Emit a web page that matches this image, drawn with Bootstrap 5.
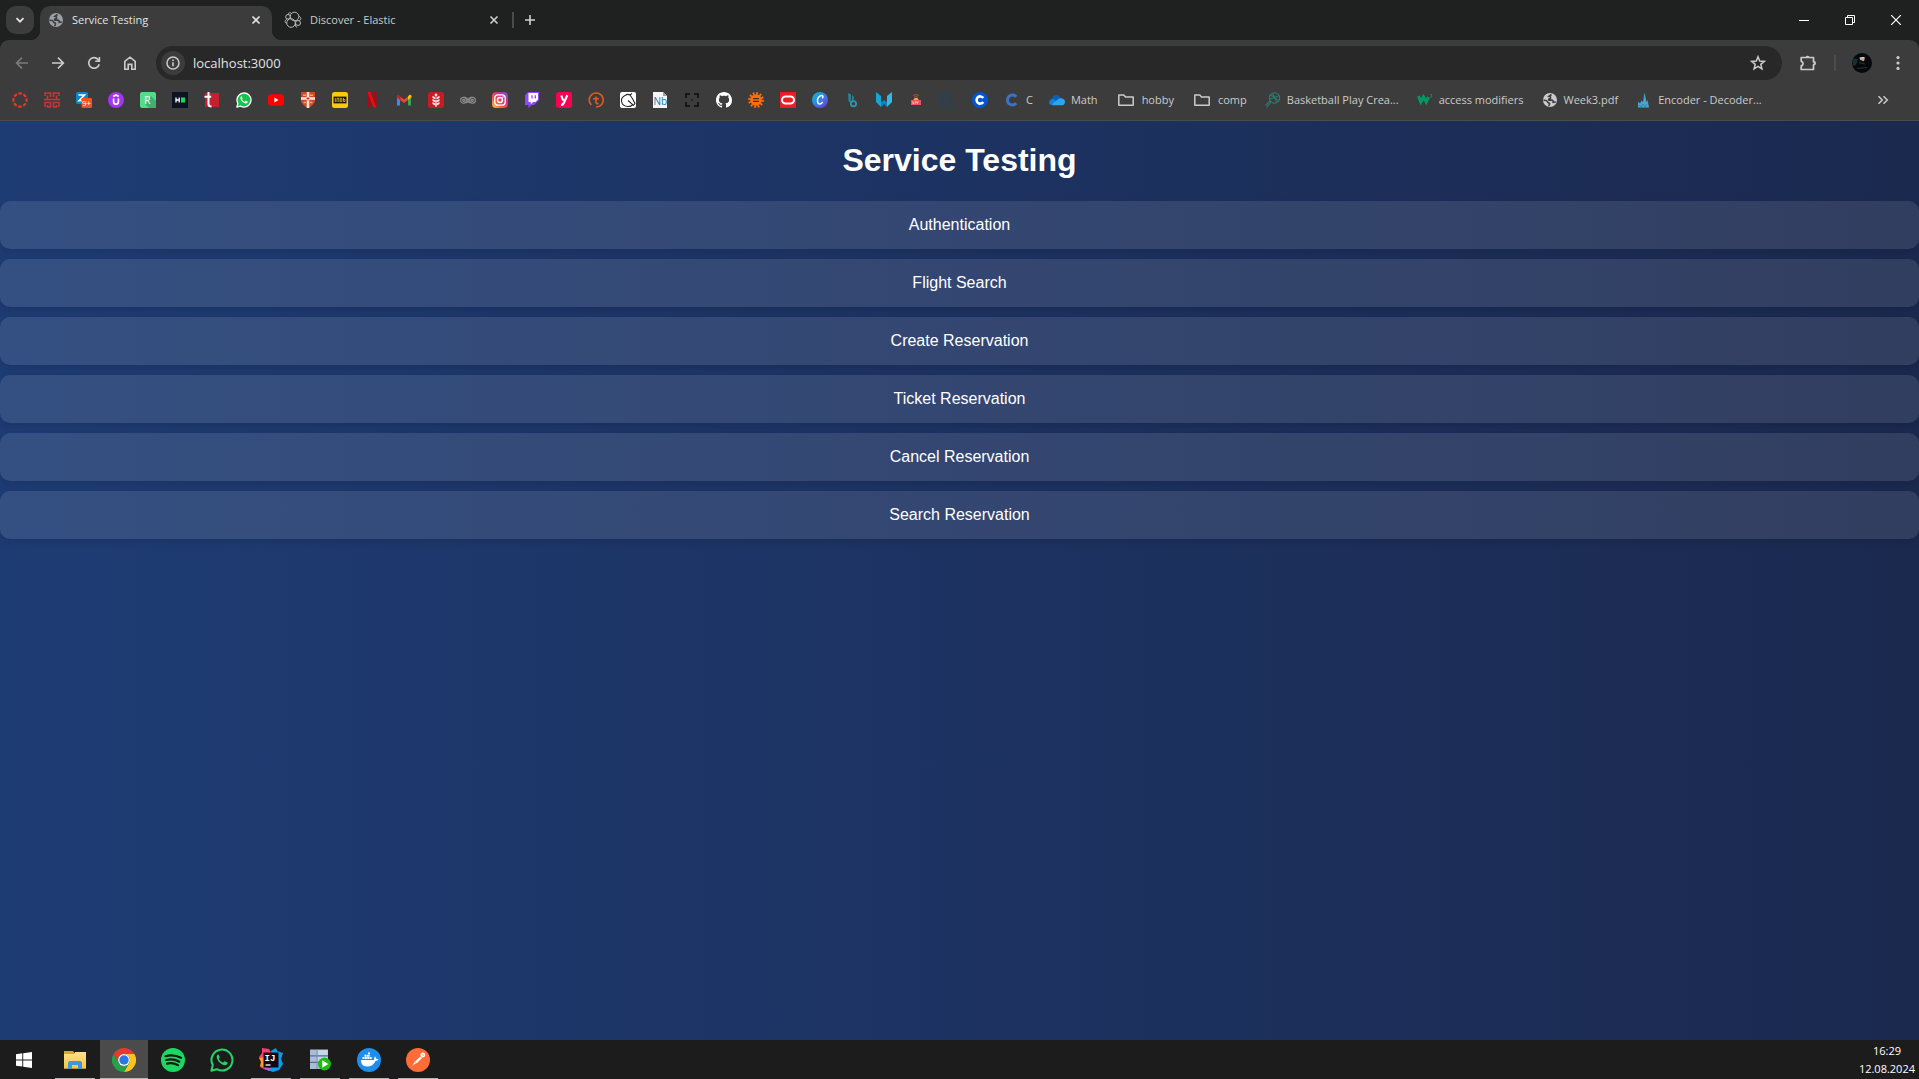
<!DOCTYPE html>
<html lang="en">
<head>
<meta charset="utf-8">
<meta name="viewport" content="width=device-width, initial-scale=1">
<title>Service Testing</title>
<link href="https://cdn.jsdelivr.net/npm/bootstrap@5.3.0/dist/css/bootstrap.min.css" rel="stylesheet">
<style>
  :root { --frame: #1f2120; --chrome: #3c3c3c; --field: #282828; --ink: #cbcbcb; }
  body { font-family: "Open Sans", "Noto Sans", sans-serif; font-size: 11px; line-height: 16px; background: var(--frame); color: var(--ink); }
  svg { display: block; flex: none; }
  a { color: inherit; text-decoration: none; }
  button { background: none; border: 0; padding: 0; color: inherit; }

  /* tab strip */
  .tabstrip { height: 40px; padding: 6px 0 0 6px; }
  .tab-search { width: 28px; height: 28px; border-radius: 10px; background: var(--chrome); margin-right: 6px; }
  .page-tab { width: 232px; height: 34px; padding: 0 9px 6px 8px; }
  .page-tab.second { width: 234px; margin: 0 2px 0 4px; }
  .page-tab.current { background: var(--chrome); border-radius: 10px 10px 0 0; color: #e3e3e3; }
  .page-tab.current::before, .page-tab.current::after { content: ""; position: absolute; bottom: 0; width: 9px; height: 9px; }
  .page-tab.current::before { left: -9px; background: radial-gradient(circle at 0 0, transparent 9px, var(--chrome) 9px); }
  .page-tab.current::after { right: -9px; background: radial-gradient(circle at 100% 0, transparent 9px, var(--chrome) 9px); }
  .tab-close { width: 14px; height: 14px; }
  .rule { width: 2px; height: 16px; background: #4a4b4b; }
  .new-tab { width: 32px; height: 28px; }
  .win-btn { width: 46px; height: 28px; color: #fff; }

  /* toolbar */
  .toolbar-area { background: var(--chrome); border-radius: 9px 9px 0 0; border-bottom: 1px solid #4b4b4b; padding-bottom: 6px; }
  .toolbar-row { height: 46px; padding: 0 3px 0 4px; }
  .tool { width: 36px; height: 34px; }
  .address { height: 34px; border-radius: 17px; background: var(--field); padding: 0 11px 0 5px; margin: 0 8px; }
  .info-btn { width: 24px; height: 24px; border-radius: 12px; background: var(--chrome); }
  .address input { background: none; border: 0; outline: 0; padding: 0; font-size: 13px; color: #e3e3e3; min-width: 0; }
  .bookmarks { height: 28px; padding: 0 22px 0 4px; }
  .bm { padding: 0 8px; gap: 6px; white-space: nowrap; }
  .bm.labelled { padding-right: 10px; }

  /* page */
  .service-page { font-family: "Liberation Sans", Arial, sans-serif; background: linear-gradient(to right, #1e3c74, #1b294f); color: #fff; }
  .service-page h1 { font-size: 32px; line-height: 37px; font-weight: 700; margin: 21px 0 22px; }
  .service-list { gap: 10px; }
  .service-btn { height: 48px; font-size: 16px; border-radius: 10px; background: rgba(255,255,255,.1); box-shadow: 0 4px 6px rgba(0,0,0,.1); }

  /* taskbar */
  .taskbar { height: 39px; background: #1c1c1c; color: #fff; }
  .task { width: 48px; height: 39px; margin-right: 1px; }
  .task.start { width: 50px; padding-right: 2px; }
  .task.open::after { content: ""; position: absolute; left: 4px; right: 4px; bottom: 0; height: 1px; background: #b9b2b0; }
  .task.active { background: #4b4b4b; }
  .task.active::after { left: 0; right: 0; }
  .clock { line-height: 18px; padding-right: 4px; }
</style>
<script src="https://cdn.jsdelivr.net/npm/bootstrap@5.3.0/dist/js/bootstrap.bundle.min.js" defer></script>
</head>
<body class="d-flex flex-column min-vh-100">

<svg width="0" height="0" class="position-absolute" aria-hidden="true">
  <defs>
    <symbol id="globe" viewBox="0 0 16 16">
      <circle cx="8" cy="8" r="7" fill="currentColor"/>
      <path d="M9.500 2.500L7 4.300q2.500.4 1.200 2.200-2 .4-1.400 1.600h2.700q2 .3 1.700 2.200l2.600-.3M1.500 8.300q3.200-.3 4 1.500.3 1 1.800 1.300.8.800-.8 3" fill="none" stroke="#3a3c3e" stroke-width="1.600"/>
    </symbol>
    <symbol id="cross" viewBox="0 0 14 14"><path d="M3.500 3.500l7 7m0-7l-7 7" stroke="currentColor" stroke-width="1.700"/></symbol>
    <symbol id="folder" viewBox="0 0 20 16"><path d="M2.800 13.200V3h5l1.700 2h7.700v8.200z" fill="none" stroke="currentColor" stroke-width="1.500" stroke-linejoin="round"/></symbol>
    <symbol id="phone" viewBox="0 0 24 24">
      <path d="M1.300 22.700l1.500-5.600a10.500 10.500 0 1 1 4.100 4.100z" fill="var(--fillbg)" stroke="var(--line)" stroke-width="2" stroke-linejoin="round"/>
      <path d="M8.300 6.500c-.5 0-1.600.8-1.600 2.500 0 3.600 5 8.200 8.200 8.200 1.500 0 2.700-1 2.700-2.200 0-.5-.2-.7-2.700-1.800-.5-.2-.8.200-1.500 1.100-.3.300-.6.200-1.300-.1-1.300-.7-2.500-1.700-3.300-3.200-.2-.4.900-1.100.9-1.700-.8-2-.8-2.800-1.400-2.800z" fill="var(--line)"/>
    </symbol>
    <linearGradient id="insta" x1="0" y1="1" x2="1" y2="0"><stop offset="0" stop-color="#fdc84b"/><stop offset=".35" stop-color="#f4573c"/><stop offset=".65" stop-color="#d32e90"/><stop offset="1" stop-color="#6b4fd8"/></linearGradient>
    <linearGradient id="canva" x1="0" y1="0" x2="1" y2="1"><stop offset="0" stop-color="#05c3cc"/><stop offset=".55" stop-color="#3a7be0"/><stop offset="1" stop-color="#7d2ae8"/></linearGradient>
    <linearGradient id="explorer" x1="0" y1="0" x2="0" y2="1"><stop offset="0" stop-color="#ffe08a"/><stop offset="1" stop-color="#f7c443"/></linearGradient>
  </defs>
</svg>

<header>
  <div class="tabstrip d-flex align-items-start">
    <button class="tab-search d-flex align-items-center justify-content-center" aria-label="Search tabs"><svg width="12" height="12" viewBox="0 0 12 12"><path d="M2.500 4.200L6 7.700l3.500-3.500" fill="none" stroke="#e3e3e3" stroke-width="1.800"/></svg></button>
    <div class="page-tab current position-relative d-flex align-items-center gap-2">
      <svg width="16" height="16" color="#9aa0a6"><use href="#globe"/></svg>
      <span class="flex-grow-1">Service Testing</span>
      <button class="tab-close" aria-label="Close Service Testing"><svg width="14" height="14"><use href="#cross"/></svg></button>
    </div>
    <div class="page-tab second d-flex align-items-center gap-2">
      <svg width="18" height="18" viewBox="0 0 18 18" fill="none" stroke="#b8b8b8" stroke-width="1"><circle cx="10.500" cy="5.500" r="4.300"/><circle cx="7" cy="12" r="4.300"/><circle cx="4" cy="5.800" r="2.300"/><circle cx="14" cy="12" r="2.500"/><path d="M3 8.200c-2.300.6-2.500 3.500-.5 4.300M15 9.600c2.500-.7 2.600-3.400-.2-4.400M4 3.500c.4-1.800 2-2.500 3.300-1M11.500 12.500c-.3 2.500 0 3 1.600 4"/></svg>
      <span class="flex-grow-1">Discover - Elastic</span>
      <button class="tab-close" aria-label="Close Discover"><svg width="14" height="14"><use href="#cross"/></svg></button>
    </div>
    <div class="d-flex align-items-center">
      <span class="rule"></span>
      <button class="new-tab d-flex align-items-center justify-content-center" aria-label="New tab"><svg width="12" height="12" viewBox="0 0 12 12"><path d="M6 1v10M1 6h10" stroke="#d0d0d0" stroke-width="1.600"/></svg></button>
    </div>
    <div class="d-flex ms-auto">
      <button class="win-btn d-flex align-items-center justify-content-center" aria-label="Minimize"><svg width="10" height="10" viewBox="0 0 10 10"><path d="M0 5.500h10" stroke="currentColor"/></svg></button>
      <button class="win-btn d-flex align-items-center justify-content-center" aria-label="Restore"><svg width="10" height="10" viewBox="0 0 10 10"><path d="M.5 2.500h7v7h-7zM2.500 2V.5h7v7H8" fill="none" stroke="currentColor"/></svg></button>
      <button class="win-btn d-flex align-items-center justify-content-center" aria-label="Close"><svg width="10" height="10" viewBox="0 0 10 10"><path d="M0 0l10 10M10 0L0 10" stroke="currentColor" stroke-width="1.200"/></svg></button>
    </div>
  </div>

  <div class="toolbar-area">
    <div class="toolbar-row d-flex align-items-center">
      <button class="tool d-flex align-items-center justify-content-center" aria-label="Back"><svg width="16" height="16" viewBox="0 0 16 16" fill="none" stroke="#7b7b7b" stroke-width="1.600"><path d="M14 8H3M8 2.600L2.600 8 8 13.400"/></svg></button>
      <button class="tool d-flex align-items-center justify-content-center" aria-label="Forward"><svg width="16" height="16" viewBox="0 0 16 16" fill="none" stroke="currentColor" stroke-width="1.600"><path d="M2 8h11M8 2.600L13.400 8 8 13.400"/></svg></button>
      <button class="tool d-flex align-items-center justify-content-center" aria-label="Reload"><svg width="16" height="16" viewBox="0 0 16 16" fill="none" stroke="currentColor" stroke-width="1.600"><path d="M13.200 9.200A5.300 5.300 0 1 1 12 4.400l1.200 1.500M13.400 2v4.200H9.200"/></svg></button>
      <button class="tool d-flex align-items-center justify-content-center" aria-label="Home"><svg width="16" height="16" viewBox="0 0 16 16" fill="none" stroke="currentColor" stroke-width="1.600"><path d="M2.800 14.200V6.400L8 2.200l5.200 4.200v7.800h-3.400V9.400H6.200v4.800z"/></svg></button>
      <form class="address d-flex align-items-center flex-grow-1">
        <button type="button" class="info-btn d-flex align-items-center justify-content-center" aria-label="Site information"><svg width="14" height="14" viewBox="0 0 14 14"><circle cx="7" cy="7" r="6" fill="none" stroke="currentColor" stroke-width="1.500"/><path d="M7 6.200v4M7 3.400v1.600" stroke="currentColor" stroke-width="1.600"/></svg></button>
        <input class="flex-grow-1 ms-2" type="text" value="localhost:3000" aria-label="Address">
        <button type="button" class="px-1" aria-label="Bookmark this page"><svg width="18" height="18" viewBox="0 0 18 18"><path d="M9 2.800l1.700 4.300 4.600.3-3.500 2.900 1.100 4.500L9 12.300l-3.900 2.500 1.100-4.500-3.500-2.900 4.600-.3z" fill="none" stroke="currentColor" stroke-width="1.500"/></svg></button>
      </form>
      <button class="tool d-flex align-items-center justify-content-center" aria-label="Extensions"><svg width="18" height="18" viewBox="0 0 18 18"><path d="M2.200 3.500h12.300v4.200a1.600 1.600 0 0 1 0 3.200v4.600H2.200v-3.700a2.300 2.300 0 0 0 0-4.500z" fill="none" stroke="currentColor" stroke-width="1.700" stroke-linejoin="round"/><path d="M6.700 3.300a1.900 1.900 0 0 1 3.700 0zM14.700 7.400a1.900 1.900 0 0 1 0 3.700z" fill="currentColor"/></svg></button>
      <span class="rule ms-2 me-2"></span>
      <button class="tool d-flex align-items-center justify-content-center" aria-label="Profile"><svg width="20" height="20" viewBox="0 0 20 20"><circle cx="10" cy="10" r="10" fill="#06090c"/><path d="M1.500 5.500Q0 10 1 13l3-1 2-6z" fill="#123038"/><path d="M8 5.200l2.500-1 2.200.8-.2 2-1.300 1.500-1.200-1-2-.5z" fill="#c9a18e"/><path d="M7.500 4.500l5-.5v1l-5 .5z" fill="#e9e4e0"/><path d="M7 9.500l6 1.500M5 15.500l10-1" stroke="#26343b" stroke-width="1.200"/></svg></button>
      <button class="tool d-flex align-items-center justify-content-center" aria-label="Menu"><svg width="16" height="16" viewBox="0 0 16 16" fill="currentColor"><circle cx="8" cy="2.600" r="1.600"/><circle cx="8" cy="8" r="1.600"/><circle cx="8" cy="13.400" r="1.600"/></svg></button>
    </div>

    <nav class="bookmarks d-flex align-items-center" aria-label="Bookmarks">
      <a class="bm" href="#" aria-label="Canvas"><svg width="16" height="16" viewBox="0 0 16 16"><circle cx="8" cy="8" r="6.600" fill="none" stroke="#e03a2d" stroke-width="2.200" stroke-dasharray="3.600 1.580" stroke-dashoffset="1.800"/></svg></a>
      <a class="bm" href="#" aria-label="University"><svg width="16" height="16" viewBox="0 0 16 16" fill="none" stroke="#c8343b" stroke-width="1.600"><path d="M1 4V1h5.500v4M15 4V1H9.500v4M3.500 3.500V7M12.500 3.500V7M0 7.500h16M1 15V10.500h5.500V15H3.500v-2M15 15v-4.500H9.500V15h3v-2"/></svg></a>
      <a class="bm" href="#" aria-label="Zimbra"><svg width="16" height="16" viewBox="0 0 16 16"><rect width="12" height="12" rx="1.500" fill="#0a86cc"/><path d="M2.500 3h6l-5.500 5.800H6" fill="none" stroke="#fff" stroke-width="1.600"/><rect x="5.500" y="6" width="10.500" height="10" rx="1" fill="#e95420"/><text x="6" y="14" font-family="Open Sans" font-size="8" fill="#fff">9+</text></svg></a>
      <a class="bm" href="#" aria-label="Udemy"><svg width="16" height="16" viewBox="0 0 16 16"><circle cx="8" cy="8" r="8" fill="#a435f0"/><path d="M5.600 6.500v3.300a2.400 2.400 0 0 0 4.800 0V6.500M5.300 4.600L8 3l2.700 1.600" fill="none" stroke="#fff" stroke-width="1.700"/></svg></a>
      <a class="bm" href="#" aria-label="Replit"><svg width="16" height="16" viewBox="0 0 16 16"><rect width="16" height="16" rx="2" fill="#55dc8b"/><path d="M11 4l5 5v7H9l-4-4z" fill="#3fb070"/><text x="4.300" y="11.500" font-family="Open Sans" font-size="10" fill="#fff">R</text></svg></a>
      <a class="bm" href="#" aria-label="HackerRank"><svg width="16" height="16" viewBox="0 0 16 16"><rect width="16" height="16" fill="#0b1420"/><path d="M4 5.500v5M7.200 5.500v5M4 8h3" stroke="#fff" stroke-width="1.300"/><rect x="9" y="5.500" width="4" height="5" fill="#1ed760"/></svg></a>
      <a class="bm" href="#" aria-label="Tureng"><svg width="16" height="16" viewBox="0 0 16 16"><rect x="1" y="1" width="14" height="14" rx="1" fill="#c4202f"/><path d="M4.500 0v12q0 2.500 3 2.500M.5 4.700h6.700" fill="none" stroke="#fff" stroke-width="2"/></svg></a>
      <a class="bm" href="#" aria-label="WhatsApp"><svg width="16" height="16" style="--fillbg:#17c34b;--line:#fff"><use href="#phone"/></svg></a>
      <a class="bm" href="#" aria-label="YouTube"><svg width="16" height="16" viewBox="0 0 16 16"><rect y="2.300" width="16" height="11.400" rx="3" fill="#f00"/><path d="M6.400 5.600v4.800L10.500 8z" fill="#fff"/></svg></a>
      <a class="bm" href="#" aria-label="Cambridge Dictionary"><svg width="16" height="16" viewBox="0 0 16 16"><path d="M1 0h14v9q-1 4.500-7 7-6-2.500-7-7z" fill="#d6452c"/><path d="M8 0v16M1 6.500h14" stroke="#f5e9d8" stroke-width="2.600"/><path d="M3 3.300h3M10 3.300h3M3.500 10.500H6M10 10.500h2.500" stroke="#f0b240" stroke-width="1.600"/><path d="M8 5v3.500M6.500 6.500h3" stroke="#c73a2a"/></svg></a>
      <a class="bm" href="#" aria-label="IMDb"><svg width="16" height="16" viewBox="0 0 16 16"><rect width="16" height="16" rx="2.500" fill="#f9cb0c"/><rect x="1.500" y="4.600" width="13" height="6.800" fill="#1b1a10"/><path d="M3.300 6v4M5 10V6.300h1.800V10M8.300 6.400v3.200h1.500V6.400zM11.500 6v3.500H13V7.500h-1.500" fill="none" stroke="#d9b10d" stroke-width=".9"/></svg></a>
      <a class="bm" href="#" aria-label="Netflix"><svg width="16" height="16" viewBox="0 0 16 16"><path d="M3.500 0v16l3-.4V0zM9.500 0v15.600l3 .4V0z" fill="#b1060f"/><path d="M3.500 0h3l6 16-3-.4z" fill="#ee0914"/></svg></a>
      <a class="bm" href="#" aria-label="Gmail"><svg width="16" height="16" viewBox="0 0 16 16"><path d="M1 4v9.500h3V7" fill="#4285f4"/><path d="M12 7v6.500h3V4" fill="#34a853"/><path d="M12 4.200V8l3.500-2.700V4q-.8-2-2.500-.8z" fill="#fbbc04"/><path d="M4 4.500l4 3 4-3V8l-4 3-4-3z" fill="#ea4335"/><path d="M.8 5.300V4Q1.500 2 3.500 3.500L4.500 5v3.400z" fill="#c5221f"/></svg></a>
      <a class="bm" href="#" aria-label="Wheat"><svg width="16" height="16" viewBox="0 0 16 16"><rect width="16" height="16" rx="2.500" fill="#c61b22"/><path d="M8 15V8" stroke="#f6dada" stroke-width="1.200"/><path d="M8 1l1.600 2L8 5 6.400 3zM7.600 7.500L4.500 6V3.800l3.100 1.700zM8.400 7.500L11.500 6V3.800L8.400 5.500zM7.600 10.600L4.500 9V6.900l3.100 1.600zM8.400 10.600L11.500 9V6.900L8.400 8.500zM7.600 13.700l-3.100-1.600V10l3.100 1.600zM8.400 13.700l3.100-1.600V10l-3.100 1.600z" fill="#fbeaea"/></svg></a>
      <a class="bm" href="#" aria-label="Owl"><svg width="16" height="16" viewBox="0 0 16 16" fill="none" stroke="#8d8d8d" stroke-width="1.200"><circle cx="3.500" cy="8.300" r="2.900"/><circle cx="12.500" cy="8.300" r="2.900"/><circle cx="3.700" cy="8.300" r="1"/><circle cx="12.300" cy="8.300" r="1"/><path d="M4 5.400Q7 5 8 8.500 9 5 12 5.400M6 11l2-2 2 2"/></svg></a>
      <a class="bm" href="#" aria-label="Instagram"><svg width="16" height="16" viewBox="0 0 16 16"><rect width="16" height="16" rx="4" fill="url(#insta)"/><rect x="2.800" y="2.800" width="10.400" height="10.400" rx="3" fill="none" stroke="#fff" stroke-width="1.300"/><circle cx="8" cy="8" r="2.500" fill="none" stroke="#fff" stroke-width="1.400"/><circle cx="11" cy="5" r=".8" fill="#fff"/></svg></a>
      <a class="bm" href="#" aria-label="Twitch"><svg width="16" height="16" viewBox="0 0 16 16"><path d="M4 0L1 3v10h3.500v3l3-3H10l5-5V0z" fill="#9146ff"/><path d="M4.500 1H14v6.500L11.500 10H9l-2.200 2.200V10H4.500z" fill="#fff"/><path d="M8 3.200v3.400M11.300 3.200v3.400" stroke="#9146ff" stroke-width="1.300"/></svg></a>
      <a class="bm" href="#" aria-label="Yemeksepeti"><svg width="16" height="16" viewBox="0 0 16 16"><rect width="16" height="16" rx="2.500" fill="#fa0050"/><path d="M5.300 3.500l1.800 5M11.300 3.300L7.800 11q-.8 2-2.800 1.800" fill="none" stroke="#fff" stroke-width="2.200"/></svg></a>
      <a class="bm" href="#" aria-label="Tutorial"><svg width="16" height="16" viewBox="0 0 16 16" fill="none" stroke="#e05a20" stroke-width="1.600"><path d="M3.300 13A7 7 0 1 1 8 15M8 4.500v5.700q0 1.800 2.600 1.300M5 6.700h6"/></svg></a>
      <a class="bm" href="#" aria-label="Lichess"><svg width="16" height="16" viewBox="0 0 16 16"><rect width="16" height="16" rx="2" fill="#fff"/><path d="M5.500 3.200q2-1.500 4.500-.2Q13 7 15 11.500l-1.500 1.800L8 8.500M5.500 3.200Q1 5 1.500 9.500q1 4.800 6.500 5 3 0 4.500-1.500M10 3l2-1.700" fill="none" stroke="#222" stroke-width="1.100"/></svg></a>
      <a class="bm" href="#" aria-label="Notebook"><svg width="16" height="16" viewBox="0 0 16 16"><path d="M1 0h10l4 4v12H1z" fill="#f4f6f7"/><path d="M11 0v4h4z" fill="#8fa4b3"/><text x="1.400" y="12.800" font-family="Open Sans" font-size="10" fill="#2476b5">Nb</text></svg></a>
      <a class="bm" href="#" aria-label="Frames"><svg width="16" height="16" viewBox="0 0 16 16" fill="none" stroke="#161616" stroke-width="2"><path d="M2 6V2h4M10 2h4v4M14 10v4h-4M6 14H2v-4"/><path d="M7.200 8h1.600" stroke-width="1.600"/></svg></a>
      <a class="bm" href="#" aria-label="GitHub"><svg width="16" height="16" viewBox="0 0 16 16"><path fill="#fff" d="M8 0C3.580 0 0 3.580 0 8c0 3.540 2.290 6.530 5.470 7.590.4.070.55-.17.55-.38 0-.19-.01-.82-.01-1.490-2.010.37-2.530-.49-2.690-.94-.09-.23-.48-.94-.82-1.130-.28-.15-.68-.52-.01-.53.63-.01 1.080.58 1.230.82.72 1.210 1.870.87 2.330.66.070-.52.28-.87.51-1.070-1.780-.2-3.640-.89-3.640-3.950 0-.87.31-1.590.82-2.150-.08-.2-.36-1.020.08-2.120 0 0 .67-.21 2.200.82.640-.18 1.320-.27 2-.27s1.360.09 2 .27c1.530-1.040 2.200-.82 2.200-.82.44 1.100.16 1.920.08 2.120.51.56.82 1.270.82 2.150 0 3.070-1.870 3.750-3.650 3.950.29.25.54.73.54 1.480 0 1.070-.01 1.930-.01 2.200 0 .21.15.46.55.38A8.010 8.010 0 0 0 16 8c0-4.420-3.580-8-8-8"/></svg></a>
      <a class="bm" href="#" aria-label="Gear"><svg width="16" height="16" viewBox="0 0 16 16"><circle cx="8" cy="8" r="5.800" fill="#ff6c0a"/><circle cx="8" cy="8" r="6.600" fill="none" stroke="#ff6c0a" stroke-width="2.600" stroke-dasharray="1.800 1.656"/><path d="M5 6.600h6M5 9.400h6" stroke="#42301f" stroke-width="1.300"/></svg></a>
      <a class="bm" href="#" aria-label="Oracle"><svg width="16" height="16" viewBox="0 0 16 16"><rect width="16" height="16" fill="#ee1c25"/><rect x="2" y="4.500" width="12" height="7" rx="3.500" fill="none" stroke="#fff" stroke-width="2"/></svg></a>
      <a class="bm" href="#" aria-label="Canva"><svg width="16" height="16" viewBox="0 0 16 16"><circle cx="8" cy="8" r="8" fill="url(#canva)"/><path d="M10.300 6.400c1.300-1.600.6-3-.9-2.900-2.400.2-4.200 3-3.900 5.800.3 3.200 3.300 3.500 5.200.7" fill="none" stroke="#fff" stroke-width="1.500"/></svg></a>
      <a class="bm" href="#" aria-label="Feather"><svg width="16" height="16" viewBox="0 0 16 16"><path d="M4 1l3 1.500V11L4.500 9.500zM8 3l1.800 1.500V9L8 11z" fill="#2a7f92"/><circle cx="9.500" cy="11.700" r="2.600" fill="none" stroke="#3192a6" stroke-width="1.900"/></svg></a>
      <a class="bm" href="#" aria-label="W"><svg width="16" height="16" viewBox="0 0 16 16"><path d="M0 0l5 4v11L0 10z" fill="#19a4d8"/><path d="M16 0l-5 4v11l5-5z" fill="#35b9e6"/><path d="M5 15V10L8 8l3 2v5l-3-3z" fill="#0b83bd"/></svg></a>
      <a class="bm" href="#" aria-label="Live"><svg width="16" height="16" viewBox="0 0 16 16"><path d="M5 3.500q3-1.800 6 0M6 5.300q2-1.300 4 0" fill="none" stroke="#a5492f" stroke-width="1.200"/><path d="M6.500 6h3L11 8.500H5z" fill="#d9b24a"/><rect x="3" y="8" width="10" height="5" fill="#f0505a"/><path d="M5 9.300v2.400h1M7.300 9.300v2.400M8.700 9.300l.7 2.200.7-2.200" fill="none" stroke="#fff" stroke-width=".7"/></svg></a>
      <a class="bm" href="#" aria-label="Codecademy"><svg width="16" height="16" viewBox="0 0 16 16" fill="none" stroke="#214458" stroke-width="1.300"><rect x=".8" y="1.500" width="10" height="13"/><path d="M8 6H4.200v4.500H8M12 14h4"/></svg></a>
      <a class="bm" href="#" aria-label="Coursera"><svg width="16" height="16" viewBox="0 0 16 16"><circle cx="8" cy="8" r="8" fill="#0056d2"/><path d="M11.200 6A3.600 3.600 0 1 0 11.200 10" fill="none" stroke="#fff" stroke-width="2.600"/></svg></a>
      <a class="bm d-flex align-items-center" href="#"><svg width="16" height="16" viewBox="0 0 16 16"><path d="M12.200 4.700A5 5 0 1 0 12.200 11.300" fill="none" stroke="#3d72c2" stroke-width="3"/></svg>C</a>
      <a class="bm labelled d-flex align-items-center" href="#"><svg width="16" height="16" viewBox="0 0 16 16"><path d="M3 9Q2.500 3.800 7 3q3.300 0 5 3.500L8 10z" fill="#0a5fb8"/><path d="M0 10.500Q.5 6.500 4.500 7L12 13H3Q.3 13 0 10.500z" fill="#1180d8"/><path d="M4 11l6.500-4.700Q16 6 16 10q0 3-3 3.200H3.500z" fill="#2aa5ee"/></svg>Math</a>
      <a class="bm labelled d-flex align-items-center" href="#"><svg width="20" height="16"><use href="#folder"/></svg>hobby</a>
      <a class="bm labelled d-flex align-items-center" href="#"><svg width="20" height="16"><use href="#folder"/></svg>comp</a>
      <a class="bm labelled d-flex align-items-center" href="#"><svg width="16" height="16" viewBox="0 0 16 16" fill="none" stroke="#2f7a74" stroke-width="1.100"><circle cx="9.500" cy="6" r="5.200"/><path d="M5 3.500q5 0 6.500 7M4.500 7q5-1 9.500-3.500M8 1q0 5 5.800 7.500M6 10l-4.500 5.500M5 9l-4.500 4.500"/></svg>Basketball Play Crea...</a>
      <a class="bm labelled d-flex align-items-center" href="#"><svg width="16" height="16" viewBox="0 0 16 16"><path d="M1.500 4l2.300 6 2.700-5 2.700 5 2.300-5" fill="none" stroke="#059862" stroke-width="3"/><path d="M13.300 2.500h1.700l-1 1.300q1.300.2.700 1.400l-1.300.3" fill="none" stroke="#059862" stroke-width=".8"/></svg>access modifiers</a>
      <a class="bm labelled d-flex align-items-center" href="#"><svg width="16" height="16" color="#c9cbcf"><use href="#globe"/></svg>Week3.pdf</a>
      <a class="bm labelled d-flex align-items-center" href="#"><svg width="16" height="16" viewBox="0 0 16 16"><path d="M2 15.500V9.500l2 2 1.500-3L7 10l1.500-9.500L10.500 10l1-2 1.500 7.500z" fill="#43a7cf"/><path d="M3 13l2 2 2-3 2 3 2-3" fill="none" stroke="#2b82aa" stroke-width=".9"/></svg>Encoder - Decoder...</a>
      <button class="ms-auto px-2" aria-label="More bookmarks"><svg width="12" height="12" viewBox="0 0 12 12" fill="none" stroke="currentColor" stroke-width="1.500"><path d="M1.500 2.200L5.300 6 1.500 9.800M6.500 2.200L10.300 6 6.500 9.800"/></svg></button>
    </nav>
  </div>
</header>

<main class="service-page flex-grow-1">
  <h1 class="text-center">Service Testing</h1>
  <div class="service-list d-grid">
    <button class="service-btn w-100 text-center">Authentication</button>
    <button class="service-btn w-100 text-center">Flight Search</button>
    <button class="service-btn w-100 text-center">Create Reservation</button>
    <button class="service-btn w-100 text-center">Ticket Reservation</button>
    <button class="service-btn w-100 text-center">Cancel Reservation</button>
    <button class="service-btn w-100 text-center">Search Reservation</button>
  </div>
</main>

<footer class="taskbar d-flex align-items-center">
  <button class="task start d-flex align-items-center justify-content-center" aria-label="Start"><svg width="16" height="16" viewBox="0 0 16 16" fill="#fff"><path d="M0 2.200L6.300 1.300V7.500H0zM7.200 1.200L16 0v7.500H7.200zM0 8.400h6.300v6.200L0 13.700zM7.200 8.400H16V16l-8.800-1.200z"/></svg></button>
  <button class="task open position-relative d-flex align-items-center justify-content-center" aria-label="File Explorer"><svg width="22" height="20" viewBox="0 0 22 20"><path d="M0 1h9l1.500 2H22v15.500H0z" fill="#e3a31c"/><path d="M0 4h10l1.200-2H22v16.500H0z" fill="url(#explorer)"/><path d="M4 19v-6.500L5.500 11h11l1.500 1.500V19h-4v-4H8v4z" fill="#3c98d8"/></svg></button>
  <button class="task open active position-relative d-flex align-items-center justify-content-center" aria-label="Google Chrome"><svg width="24" height="24" viewBox="0 0 24 24"><path d="M1.600 6A12 12 0 0 1 22.400 6H12a6 6 0 0 0-5.200 9z" fill="#e33b2e"/><path d="M22.400 6A12 12 0 0 1 12 24l5.200-9A6 6 0 0 0 12 6z" fill="#fcc31e"/><path d="M1.600 6A12 12 0 0 0 12 24l5.200-9a6 6 0 0 1-10.400 0z" fill="#26a148"/><circle cx="12" cy="12" r="5.900" fill="#fff"/><circle cx="12" cy="12" r="4.700" fill="#2a78e4"/></svg></button>
  <button class="task d-flex align-items-center justify-content-center" aria-label="Spotify"><svg width="24" height="24" viewBox="0 0 24 24"><circle cx="12" cy="12" r="12" fill="#1ed760"/><path d="M4.500 8.200Q12.500 6 20 9.800M5.300 12q7-1.800 13 1.700M6 15.600q6-1.300 11 1.500" fill="none" stroke="#101a13" stroke-width="2.200" stroke-linecap="round"/></svg></button>
  <button class="task d-flex align-items-center justify-content-center" aria-label="WhatsApp"><svg width="24" height="24" style="--fillbg:none;--line:#25d366"><use href="#phone"/></svg></button>
  <button class="task open position-relative d-flex align-items-center justify-content-center" aria-label="IntelliJ IDEA"><svg width="24" height="24" viewBox="0 0 24 24"><path d="M3 0l7 1 3 5-6 16-6-3 2-5-3-5 3-4z" fill="#fc3d6f"/><path d="M0 10l6-1v11l-5-2 1-4z" fill="#ff9a2d"/><path d="M12 3l5-3 1 3 6 2-2 6 2 5-4 6-6 2-6-2 6-5z" fill="#0a9df2"/><path d="M6 19l6 1-2 3-6-3z" fill="#c757d8"/><rect x="4.500" y="4.500" width="15" height="15" fill="#140b12"/><text x="5.500" y="12.500" font-family="Liberation Mono" font-weight="700" font-size="9" fill="#fff">IJ</text><path d="M6.500 17h5" stroke="#fff" stroke-width="1.300"/></svg></button>
  <button class="task open position-relative d-flex align-items-center justify-content-center" aria-label="Database"><svg width="24" height="24" viewBox="0 0 24 24"><rect x="2" y="1.500" width="18" height="19.500" fill="#a9bcd8"/><path d="M9.600 2h10v5.200h-10zM9.600 8.500h10v5h-10z" fill="#c7d5ea"/><path d="M2 7.800h18M2 14.300h18" stroke="#586f96" stroke-width="1.200"/><path d="M9 1.500V21" stroke="#7d92b5"/><circle cx="16.500" cy="16" r="6.500" fill="#1dbb0e"/><path d="M14.300 12.300v7.400l6-3.700z" fill="#fff"/></svg></button>
  <button class="task open position-relative d-flex align-items-center justify-content-center" aria-label="Docker"><svg width="24" height="24" viewBox="0 0 24 24"><circle cx="12" cy="12" r="12" fill="#1d8eed"/><path d="M4 12h13.300q-.7-2 .6-3.500 1.200.8 1.400 2.400 1.200-.2 2.200.3-.8 1.700-3 1.800Q16 18.500 10 18.500 4 18.500 4 12z" fill="#fff"/><path d="M5.500 10h9.500M7.500 7.700h5.500M11 5.400h2" stroke="#fff" stroke-width="1.900" stroke-dasharray="2 .4"/></svg></button>
  <button class="task open position-relative d-flex align-items-center justify-content-center" aria-label="Postman"><svg width="24" height="24" viewBox="0 0 24 24"><circle cx="12" cy="12" r="12" fill="#ff6c37"/><path d="M5.500 18.500l3.500-5 5.500-5 1.500 1.500-5.500 5.500z" fill="#fff"/><path d="M9 13.500l1.500 2L5.500 18" fill="none" stroke="#ff6c37" stroke-width=".7"/><circle cx="16.800" cy="7" r="2.400" fill="#fff"/><path d="M15.800 6.400q1.200 1.400 2.400.6" fill="none" stroke="#ff6c37" stroke-width=".7"/></svg></button>
  <div class="clock ms-auto text-center"><div>16:29</div><div>12.08.2024</div></div>
</footer>
</body>
</html>
